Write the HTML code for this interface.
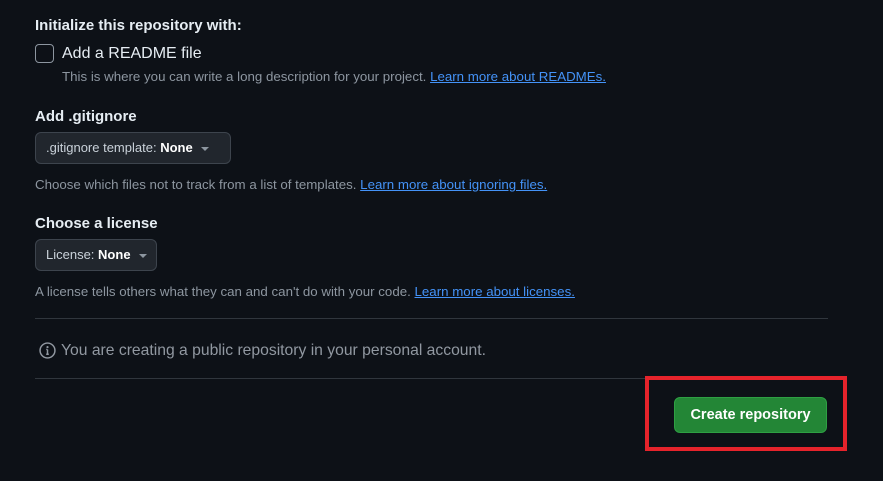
<!DOCTYPE html>
<html><head><meta charset="utf-8"><style>
*{box-sizing:border-box;margin:0;padding:0}
body{width:883px;height:481px;background:#0d1117;color:#e6edf3;font-family:"Liberation Sans",sans-serif;position:relative;overflow:hidden}
.a{position:absolute;white-space:nowrap}
h3{font-size:15px;font-weight:bold;color:#e6edf3}
.m{font-size:13.3px;color:#8d96a0}
.l{color:#4493f8;text-decoration:underline}
.btn{position:absolute;white-space:nowrap;background:#21262d;border:1px solid #3d444d;border-radius:6px;font-size:13px;color:#c9d1d9;padding:0 10px;height:32px;line-height:30px}
.btn b{color:#fff}
.caret{display:inline-block;width:0;height:0;border-left:4px solid transparent;border-right:4px solid transparent;border-top:4px solid #8d96a0;margin-left:8px;vertical-align:middle}
.hr{position:absolute;left:35px;width:793px;height:1px;background:#30363d}
</style></head><body>
<div class="a" style="left:35px;top:17px"><h3>Initialize this repository with:</h3></div>
<div class="a" style="left:35px;top:44px;width:19px;height:19px;border:1.5px solid #8d96a0;border-radius:4px"></div>
<div class="a" style="left:62px;top:45px;font-size:16px;color:#e6edf3">Add a README file</div>
<div class="a m" style="left:62px;top:69px">This is where you can write a long description for your project. <span class="l">Learn more about READMEs.</span></div>

<div class="a" style="left:35px;top:108px"><h3>Add .gitignore</h3></div>
<div class="btn" style="left:35px;top:132px;width:196px">.gitignore template: <b>None</b><span class="caret"></span></div>
<div class="a m" style="left:35px;top:177px">Choose which files not to track from a list of templates. <span class="l">Learn more about ignoring files.</span></div>

<div class="a" style="left:35px;top:215px"><h3>Choose a license</h3></div>
<div class="btn" style="left:35px;top:239px;width:122px">License: <b>None</b><span class="caret"></span></div>
<div class="a m" style="left:35px;top:284px">A license tells others what they can and can't do with your code. <span class="l">Learn more about licenses.</span></div>

<div class="hr" style="top:318px"></div>
<svg class="a" style="left:39px;top:342px" width="17" height="17" viewBox="0 0 16 16"><circle cx="8" cy="8" r="7" fill="none" stroke="#9198a1" stroke-width="1.4"/><circle cx="8" cy="4.8" r="1" fill="#9198a1"/><path d="M8 7v4.5M6.8 11.5h2.4M6.8 7H8" stroke="#9198a1" stroke-width="1.4" fill="none"/></svg>
<div class="a" style="left:61px;top:342px;font-size:15.7px;color:#9198a1">You are creating a public repository in your personal account.</div>
<div class="hr" style="top:378px"></div>

<div class="a" style="left:645px;top:376px;width:202px;height:75px;border:4px solid #e5232b"></div>
<div class="a" style="left:674px;top:397px;width:153px;height:36px;background:#238636;border:1px solid #2ea043;border-radius:6px;color:#fff;font-size:14.5px;font-weight:bold;text-align:center;line-height:34px">Create repository</div>
</body></html>
